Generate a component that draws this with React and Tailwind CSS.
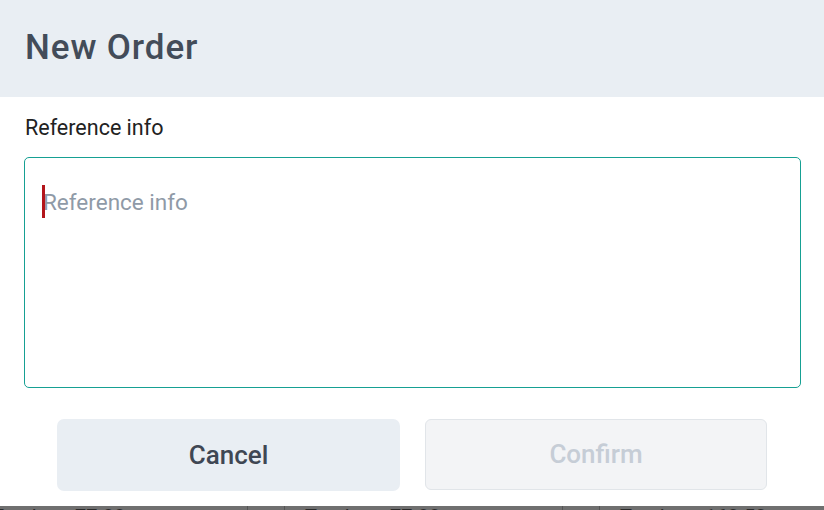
import React from 'react';

const font = { fontFamily: 'Roboto, "Noto Sans", sans-serif' };

// Page content that peeks out under the dialog's bottom edge
const BackdropStrip = () => (
    <div className="h-[4px] overflow-hidden bg-[#6f6f6f] mt-[15px] flex text-[20px] leading-[20px] text-[#2a2a2a] whitespace-nowrap">
        <div className="w-[247px] shrink-0 flex pt-px">
            <span className="ml-[-8px] w-[83px]">Total</span>
            <span>77.88</span>
        </div>
        <div className="w-[38px] shrink-0 border-x border-[#555]" />
        <div className="w-[277px] shrink-0 flex pt-px pl-[20px]">
            <span className="w-[85px]">Total</span>
            <span>77.88</span>
        </div>
        <div className="w-[38px] shrink-0 border-x border-[#555]" />
        <div className="flex pt-px pl-[20px]">
            <span className="w-[85px]">Total</span>
            <span>162.53</span>
        </div>
    </div>
);

export default function App() {
    return (
        <div className="w-[824px] h-[510px] bg-white overflow-hidden flex flex-col" style={font}>
            {/* HEADER */}
            <div className="h-[97px] shrink-0 bg-[#e9eef3] flex items-center px-[25px]">
                <h1 className="text-[35px] font-medium text-[#434c59] tracking-[0.9px]">New Order</h1>
            </div>

            {/* BODY */}
            <div className="px-[24px] pt-[17px]">
                <label className="block text-[21.5px] leading-[27px] text-[#222] pl-px">Reference info</label>
                <div className="relative mt-[16px]">
                    <textarea
                        placeholder="Reference info"
                        className="block w-[777px] h-[231px] resize-none rounded-[5px] border-[1.5px] border-[#16a093] pl-[18px] pt-[30px] text-[22.5px] leading-[28px] text-[#222] placeholder:text-[#8f9aa7] outline-none"
                    />
                    <span className="absolute left-[18px] top-[28px] w-[3px] h-[33px] bg-[#b3151b]" />
                </div>
            </div>

            {/* ACTIONS */}
            <div className="flex gap-[25px] px-[57px] mt-[31px]">
                <button className="w-[343px] h-[72px] rounded-[7px] bg-[#e9eef3] text-[26px] font-medium text-[#3f4753]">
                    Cancel
                </button>
                <button disabled className="w-[342px] h-[71px] rounded-[6px] bg-[#f3f4f6] border-[1.5px] border-[#e1e5e9] text-[26px] font-medium text-[#c6cdd6]">
                    Confirm
                </button>
            </div>

            <BackdropStrip />
        </div>
    );
}
